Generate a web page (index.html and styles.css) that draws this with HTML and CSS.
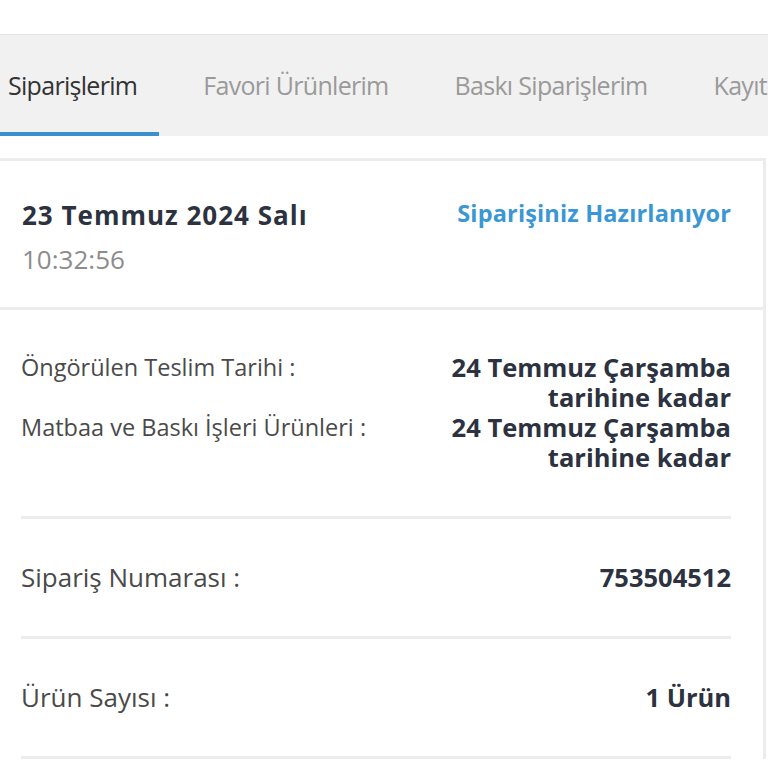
FILE: index.html
```html
<!DOCTYPE html>
<html lang="tr">
  <head>
    <meta charset="UTF-8" />
    <meta name="viewport" content="width=device-width, initial-scale=1.0" />
    <title>Siparişlerim</title>
    <link rel="stylesheet" href="styles.css">
  </head>
  <body>
    <div class="top-space"></div>
    <div class="tabs">
      <div class="tab active">Siparişlerim</div>
      <div class="tab">Favori Ürünlerim</div>
      <div class="tab">Baskı Siparişlerim</div>
      <div class="tab">Kayıtlı Adreslerim</div>
    </div>
    <div class="order-card">
      <div class="order-head">
        <div>
          <div class="order-date">23 Temmuz 2024 Salı</div>
          <div class="order-time">10:32:56</div>
        </div>
        <div class="order-status">Siparişiniz Hazırlanıyor</div>
      </div>
      <div class="order-body">
        <div class="info-block">
          <div class="info-row">
            <div class="label">Öngörülen Teslim Tarihi :</div>
            <div class="value">24 Temmuz Çarşamba<br />tarihine kadar</div>
          </div>
          <div class="info-row">
            <div class="label">Matbaa ve Baskı İşleri Ürünleri :</div>
            <div class="value">24 Temmuz Çarşamba<br />tarihine kadar</div>
          </div>
        </div>
        <div class="info-block single">
          <div class="info-row">
            <div class="label">Sipariş Numarası :</div>
            <div class="value">753504512</div>
          </div>
        </div>
        <div class="info-block single">
          <div class="info-row">
            <div class="label">Ürün Sayısı :</div>
            <div class="value">1 Ürün</div>
          </div>
        </div>
      </div>
    </div>
  </body>
</html>
```

FILE: styles.css
```css
* {
  padding: 0;
  margin: 0;
  box-sizing: border-box;
}
body {
  font-family: "Open Sans", "Liberation Sans", sans-serif;
  background: #fff;
  color: #2c3240;
  width: 768px;
  overflow: hidden;
}
.top-space {
  height: 35px;
  border-bottom: 1px solid #e6e6e6;
}
.tabs {
  display: flex;
  background: #f1f1f1;
  height: 101px;
  white-space: nowrap;
  overflow: hidden;
}
.tab {
  flex: none;
  padding: 4px 22px 0 8px;
  margin-right: 36px;
  line-height: 93px;
  font-size: 25px;
  letter-spacing: -0.7px;
  color: #9a9a9a;
  border-bottom: 4px solid transparent;
}
.tab.active {
  color: #333;
  border-bottom-color: #3a8fcf;
}
.order-card {
  margin-top: 22px;
  margin-right: 2px;
  border-top: 3px solid #ececec;
  border-right: 3px solid #ececec;
}
.order-head {
  display: flex;
  justify-content: space-between;
  padding: 37px 32px 31px 22px;
  border-bottom: 3px solid #ececec;
}
.order-date {
  font-size: 26px;
  font-weight: 700;
  letter-spacing: 1px;
  line-height: 34px;
}
.order-time {
  font-size: 26px;
  color: #8c8c8c;
  line-height: 34px;
  margin-top: 10px;
}
.order-status {
  font-size: 23.5px;
  font-weight: 700;
  letter-spacing: 0.15px;
  color: #3b97d3;
  line-height: 30px;
}
.order-body {
  padding: 0 32px 0 21px;
}
.info-block {
  padding: 42px 0 44px;
  border-bottom: 3px solid #ececec;
}
.info-block.single {
  padding: 43px 0 44px;
}
.info-row {
  display: flex;
  justify-content: space-between;
  align-items: flex-start;
}
.label {
  font-size: 23.5px;
  color: #4a4a4a;
  line-height: 30px;
}
.single .label {
  font-size: 26px;
}
.value {
  font-size: 25.5px;
  font-weight: 700;
  text-align: right;
  line-height: 30px;
}
```
